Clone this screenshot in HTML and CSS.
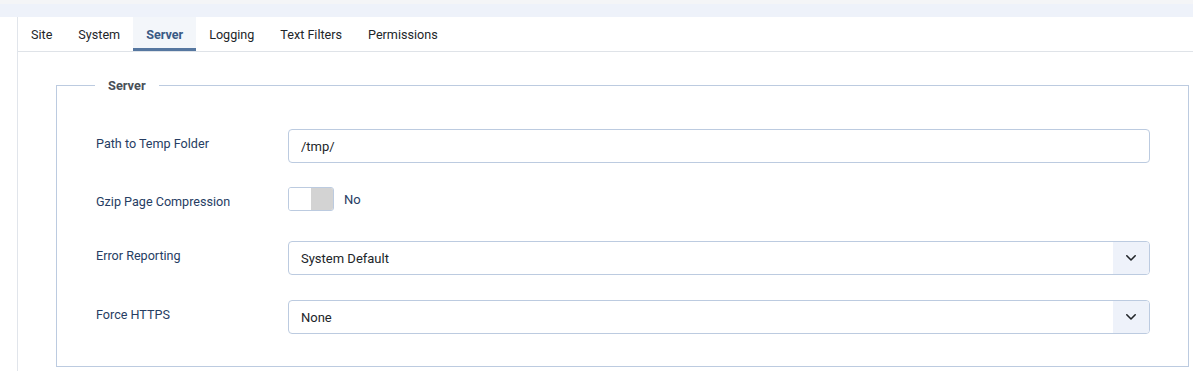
FILE: index.html
```html
<!DOCTYPE html>
<html>
<head>
<meta charset="utf-8">
<link rel="stylesheet" href="styles.css">
</head>
<body>
<div class="topbar"></div>
<div class="band"></div>
<div class="main">
  <ul class="tabs">
    <li class="tab">Site</li>
    <li class="tab">System</li>
    <li class="tab active">Server</li>
    <li class="tab">Logging</li>
    <li class="tab">Text Filters</li>
    <li class="tab">Permissions</li>
  </ul>
  <div class="content">
    <fieldset class="box">
      <legend class="legend">Server</legend>
      <div class="row">
        <label class="label">Path to Temp Folder</label>
        <div class="control"><input class="input" type="text" value="/tmp/"></div>
      </div>
      <div class="row row-toggle">
        <label class="label">Gzip Page Compression</label>
        <div class="control toggle-wrap">
          <span class="toggle"><span class="half on"></span><span class="half off"></span></span>
          <span class="toggle-text">No</span>
        </div>
      </div>
      <div class="row row-select">
        <label class="label">Error Reporting</label>
        <div class="control">
          <div class="select"><span class="select-text">System Default</span><span class="arrow"><svg width="12" height="8" viewBox="0 0 12 8"><path d="M1.8 1.8 L6 6 L10.2 1.8" fill="none" stroke="#212529" stroke-width="1.6" stroke-linecap="round" stroke-linejoin="round"/></svg></span></div>
        </div>
      </div>
      <div class="row last">
        <label class="label">Force HTTPS</label>
        <div class="control">
          <div class="select"><span class="select-text">None</span><span class="arrow"><svg width="12" height="8" viewBox="0 0 12 8"><path d="M1.8 1.8 L6 6 L10.2 1.8" fill="none" stroke="#212529" stroke-width="1.6" stroke-linecap="round" stroke-linejoin="round"/></svg></span></div>
        </div>
      </div>
    </fieldset>
  </div>
</div>
</body>
</html>
```
FILE: styles.css
```css
* { box-sizing: border-box; }
html, body { margin: 0; padding: 0; background: #fff; }
body {
  font-family: Roboto, "Liberation Sans", Arial, sans-serif;
  font-size: 13px;
  color: #212529;
  height: 371px;
  overflow: hidden;
}
.topbar { height: 4px; background: #f4f5f7; }
.band { height: 13px; background: #eef2fa; }
.main {
  margin-left: 17px;
  border-left: 1px solid #e1e5eb;
  height: 354px;
}
.tabs {
  list-style: none;
  margin: 0;
  padding: 0;
  display: flex;
  border-bottom: 1px solid #dfe3e8;
  height: 35px;
}
.tab {
  padding: 0 13px;
  height: 34px;
  display: flex;
  align-items: center;
  color: #22262a;
  font-size: 12.6px;
  border-bottom: 3px solid transparent;
  padding-top: 3px;
}
.tab.active {
  background: #f3f6fa;
  color: #3a5a85;
  font-weight: bold;
  border-bottom-color: #5677a0;
}
.content {
  padding: 26px 4px 0 38px;
}
.box {
  margin: 0;
  border: 1px solid #bccbe0;
  padding: 36px 38px 32px 39px;
  min-width: 0;
}
.legend {
  margin-left: -1px;
  padding: 0 13px;
  font-weight: bold;
  color: #495057;
  font-size: 12.8px;
  line-height: 15px;
}
.row {
  display: grid;
  grid-template-columns: 192px 1fr;
  align-items: start;
  margin-bottom: 24px;
}
.row-toggle { margin-bottom: 30px; }
.row-select { margin-bottom: 25px; }
.row.last { margin-bottom: 0; }
.label {
  color: #263d63;
  font-size: 12.6px;
  padding-top: 7px;
  line-height: 16px;
}
.input {
  display: block;
  width: 100%;
  height: 34px;
  border: 1px solid #bccbe0;
  border-radius: 4px;
  padding: 0 12px;
  font-family: inherit;
  font-size: 13px;
  color: #212529;
  background: #fff;
  outline: none;
}
.toggle-wrap {
  display: flex;
  align-items: center;
  gap: 10px;
}
.toggle {
  display: flex;
  width: 46px;
  height: 24px;
  border: 1px solid #bccbe0;
  border-radius: 3px;
  overflow: hidden;
}
.half { flex: 1; }
.half.on { background: #fff; }
.half.off { background: #d3d3d3; }
.toggle-text { color: #263d63; font-size: 13px; }
.select {
  display: flex;
  height: 34px;
  border: 1px solid #bccbe0;
  border-radius: 4px;
  overflow: hidden;
  background: #fff;
}
.select-text {
  flex: 1;
  display: flex;
  align-items: center;
  padding: 0 12px;
  color: #212529;
}
.arrow {
  width: 36px;
  background: #eef2fa;
  display: flex;
  align-items: center;
  justify-content: center;
}
```
